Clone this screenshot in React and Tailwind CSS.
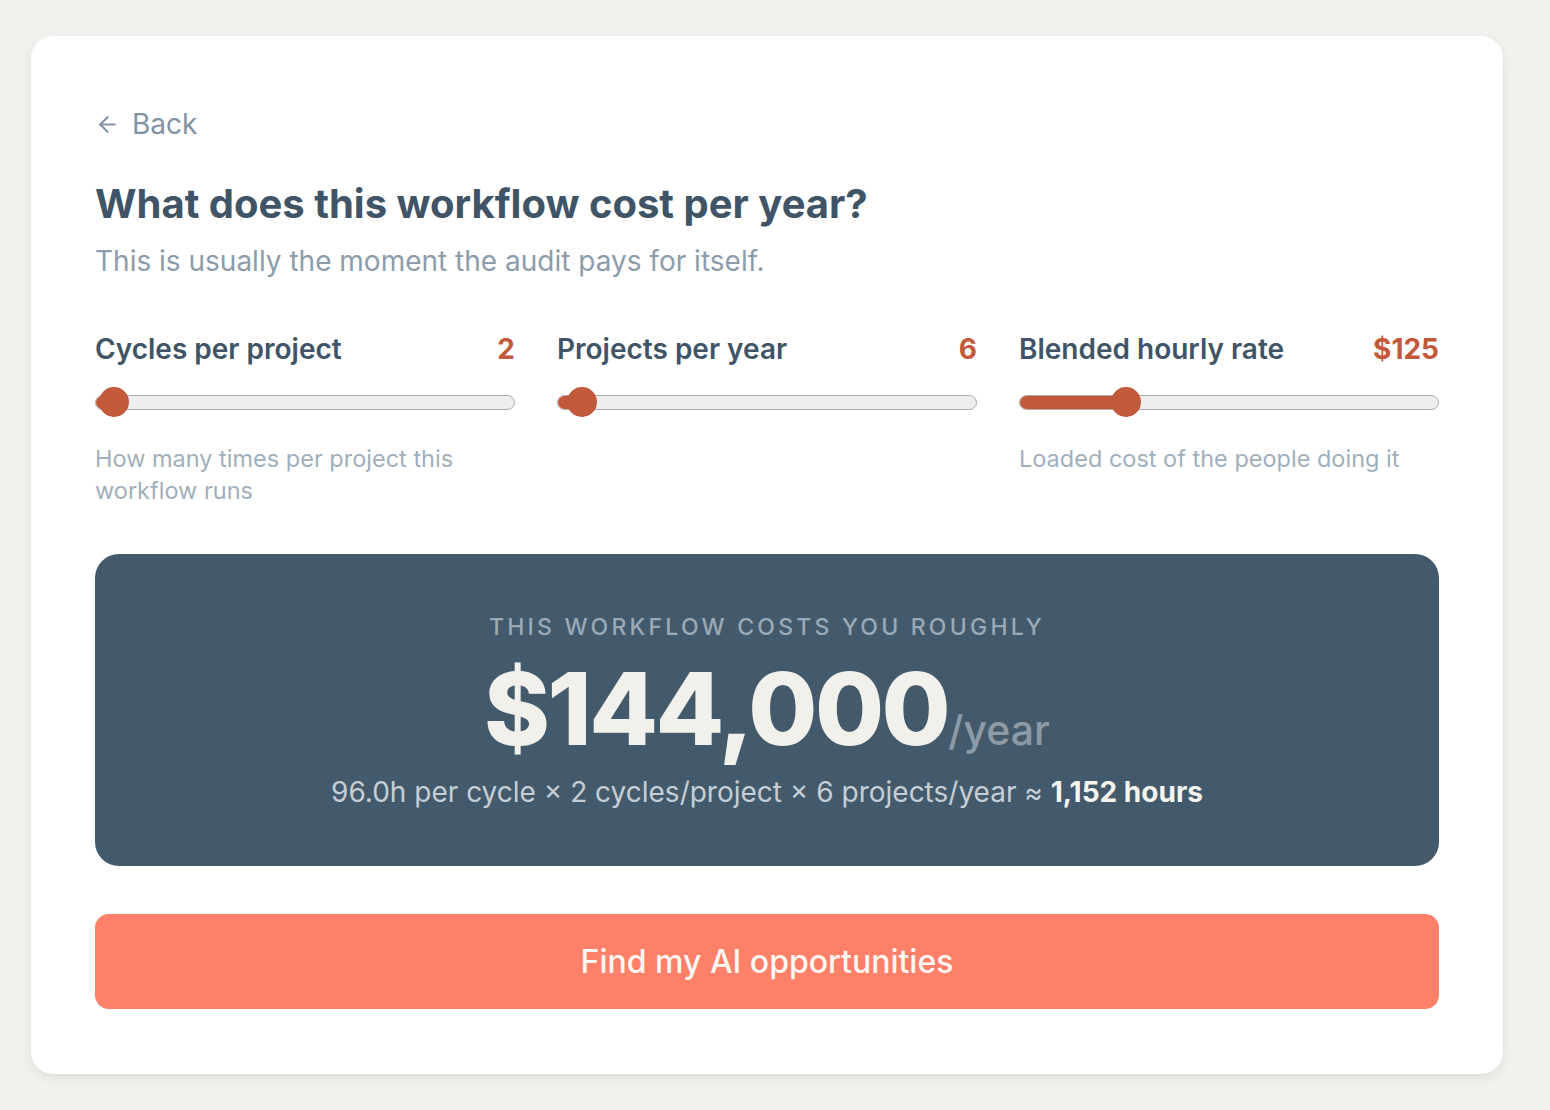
import React from 'react';

const sliders = [
  { label: 'Cycles per project', value: '2', offset: 19, help: 'How many times per project this workflow runs' },
  { label: 'Projects per year', value: '6', offset: 25, help: '' },
  { label: 'Blended hourly rate', value: '$125', offset: 107, help: 'Loaded cost of the people doing it' },
];

const Slider = ({ label, value, offset, help }) => (
  <div className="flex flex-col">
    <div className="flex items-center justify-between h-[40px]">
      <span className="text-[28px] font-semibold text-[#3f5567]">{label}</span>
      <span className="text-[28px] font-bold text-[#c2593a]">{value}</span>
    </div>
    <div className="relative mt-[18px] h-[30px] flex items-center">
      <div className="relative w-full h-[15px] rounded-full border-[1.5px] border-[#a9a9a9] bg-[#eeeeee] overflow-hidden">
        <div className="h-full bg-[#c2593a]" style={{ width: offset + 'px' }} />
      </div>
      <div
        className="absolute top-0 w-[30px] h-[30px] rounded-full bg-[#c2593a]"
        style={{ left: offset - 15 + 'px' }}
      />
    </div>
    <p className="mt-[26px] text-[23.5px] leading-[32px] text-[#a0afbc]">{help}</p>
  </div>
);

export default function App() {
  return (
    <div className="min-h-screen bg-[#f2f1ed] pt-[36px] pb-[35px] font-['Inter',sans-serif]">
      <div className="ml-[31px] w-[1472px] bg-white rounded-[22px] shadow-[0_4px_12px_rgba(0,0,0,0.08)] px-[64px] pt-[69px] pb-[65px]">
        <button className="flex items-center gap-[12px] text-[28px] text-[#8193a4] h-[38px]">
          <svg width="25" height="25" viewBox="0 0 24 24" fill="none" stroke="currentColor" strokeWidth="2" strokeLinecap="round" strokeLinejoin="round">
            <path d="M19 12H5" />
            <path d="M12 19l-7-7 7-7" />
          </svg>
          Back
        </button>

        <h1 className="mt-[36px] text-[40px] font-bold text-[#3f5567] leading-[50px]">What does this workflow cost per year?</h1>
        <p className="mt-[12px] text-[28px] text-[#8c9cab] leading-[40px]">This is usually the moment the audit pays for itself.</p>

        <div className="mt-[48px] grid grid-cols-3 gap-x-[42px]">
          {sliders.map(s => (
            <Slider key={s.label} {...s} />
          ))}
        </div>

        <div className="mt-[47px] rounded-[24px] bg-[#435a6d] flex flex-col items-center pt-[58px] pb-[54px]">
          <div className="text-[23px] font-medium tracking-[0.14em] text-[#9ba9b5] leading-[30px]">THIS WORKFLOW COSTS YOU ROUGHLY</div>
          <div className="mt-[12px] flex items-baseline leading-[110px]">
            <span className="text-[100px] font-extrabold text-[#f2f0eb] tracking-[-0.025em]">$144,000</span>
            <span className="text-[41px] font-medium text-[#8d9ba7]">/year</span>
          </div>
          <div className="mt-[-13px] text-[28px] text-[#c6ced5] leading-[40px]">
            96.0h per cycle × 2 cycles/project × 6 projects/year ≈ <span className="font-bold text-[#f6f4ef]">1,152 hours</span>
          </div>
        </div>

        <button className="mt-[48px] w-full h-[95px] rounded-[14px] bg-[#ff8068] text-[32px] font-medium text-[#fff8f2]">
          Find my AI opportunities
        </button>
      </div>
    </div>
  );
}
